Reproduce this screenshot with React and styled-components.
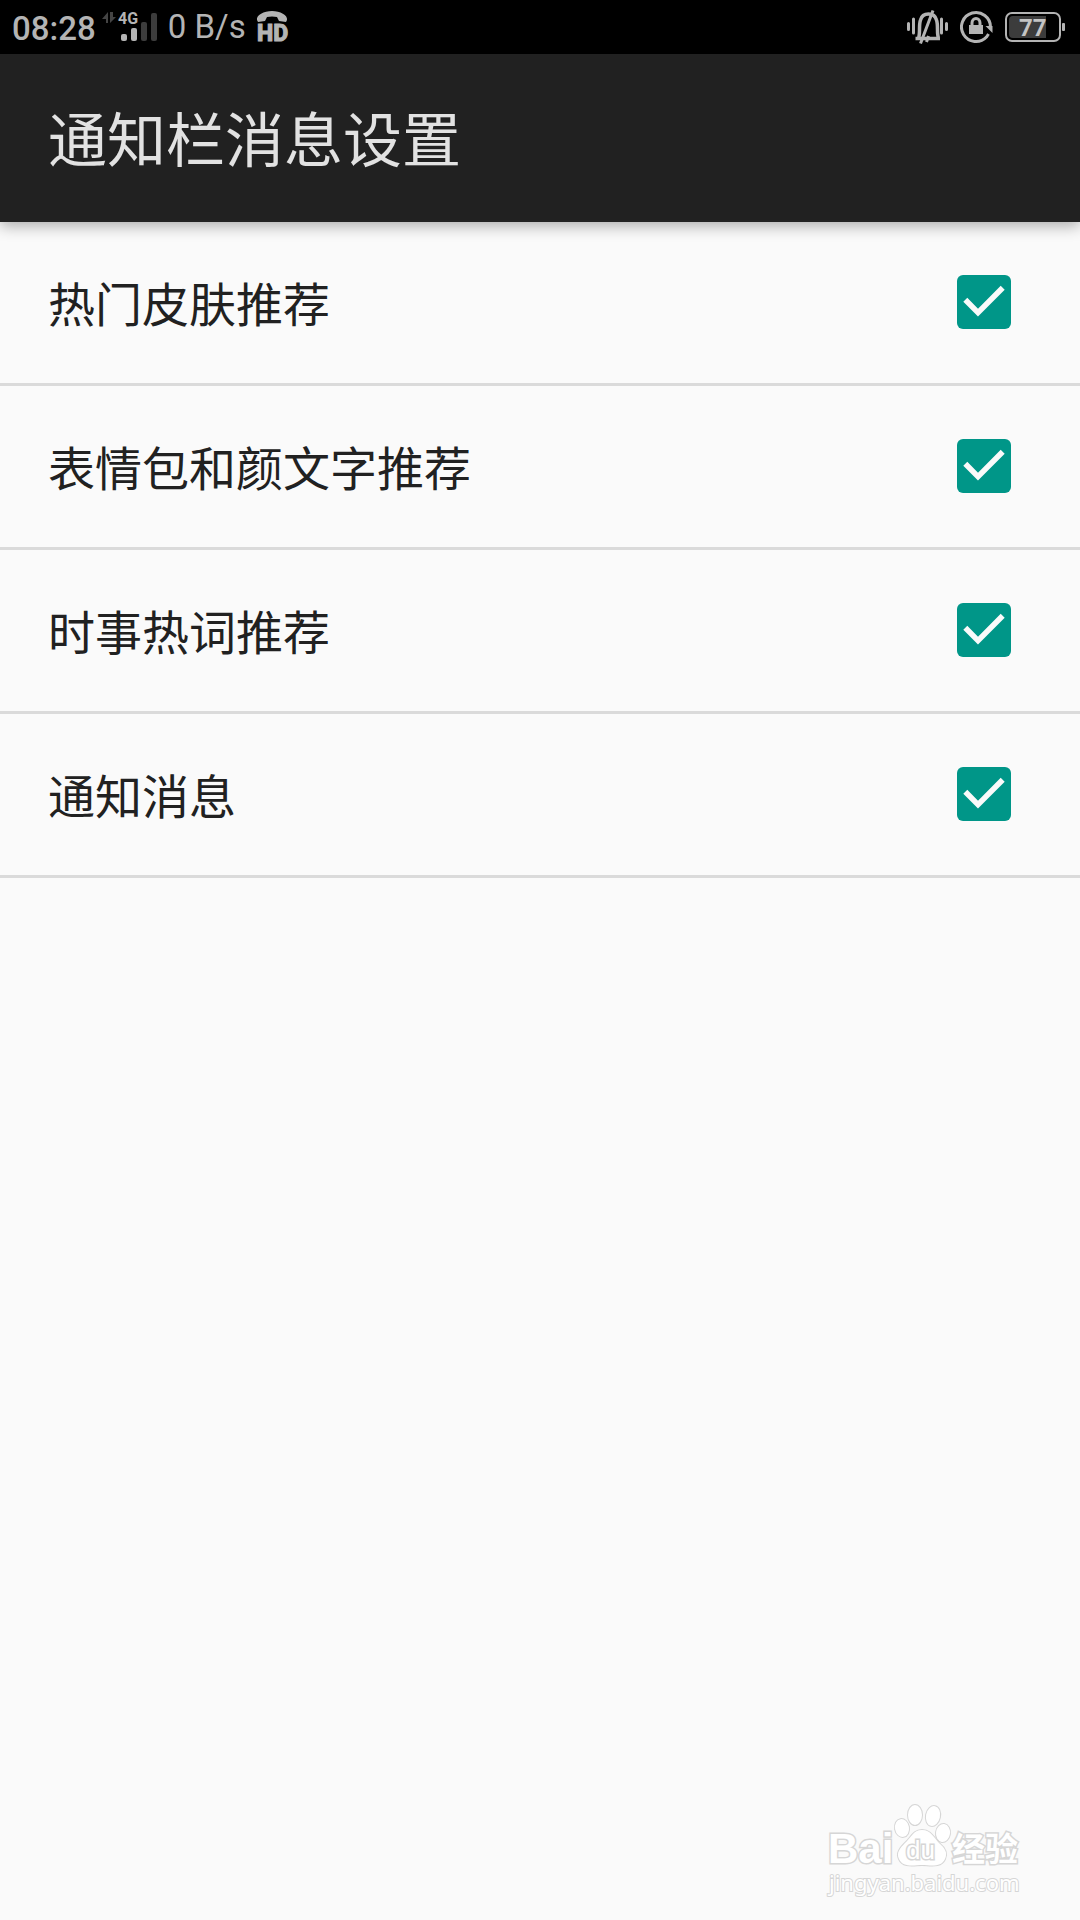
import React, { useState } from 'react';
import styled, { createGlobalStyle } from 'styled-components';

const GlobalStyle = createGlobalStyle`
  body {
    margin: 0;
    background: #fafafa;
    font-family: Roboto, 'Noto Sans CJK SC', sans-serif;
  }
`;

const Page = styled.div`
  display: flex;
  flex-direction: column;
  min-height: 100vh;
`;

const StatusBar = styled.div`
  display: flex;
  justify-content: space-between;
  height: 54px;
  padding: 0 15px 0 12px;
  background: #000;
  color: #b4b4b4;
`;

const StatusGroup = styled.div`
  display: flex;
  align-items: center;
  gap: ${props => props.gap}px;
`;

const Clock = styled.span`
  font-size: 33px;
  font-weight: 500;
  line-height: 54px;
  padding-top: 4px;
`;

const Speed = styled.span`
  font-size: 33px;
  line-height: 54px;
`;

const Icon = styled.svg`
  display: block;
  flex: none;
`;

const Header = styled.header`
  display: flex;
  align-items: center;
  box-sizing: border-box;
  height: 168px;
  padding: 8px 48px 0;
  background: #212121;
  box-shadow: 0 4px 14px rgba(0, 0, 0, 0.32);
`;

const Title = styled.h1`
  margin: 0;
  color: #e2e2e2;
  font-size: 59px;
  font-weight: 400;
  line-height: 84px;
`;

const List = styled.ul`
  margin: 0;
  padding: 0;
  list-style: none;
`;

const Row = styled.li`
  border-bottom: 3px solid #dadada;
`;

const RowLabel = styled.label`
  display: flex;
  align-items: center;
  justify-content: space-between;
  box-sizing: border-box;
  height: 161px;
  padding: 0 69px 2px 48px;
  color: #212121;
  font-size: 47px;
  cursor: pointer;
`;

const CheckWrap = styled.span`
  display: grid;

  > * {
    grid-area: 1 / 1;
  }
`;

const Checkbox = styled.input`
  appearance: none;
  box-sizing: border-box;
  width: 54px;
  height: 54px;
  margin: 0;
  border: 6px solid #757575;
  border-radius: 6px;
  cursor: pointer;

  &:checked {
    border: none;
    background: #009688;
  }
`;

const Tick = styled.svg`
  pointer-events: none;
`;

const Footer = styled.footer`
  display: flex;
  justify-content: flex-end;
  margin-top: auto;
  padding: 0 55px 15px 0;
`;

const SignalIcon = () => (
  <Icon width="60" height="54" viewBox="103 0 60 54" fill="#b4b4b4">
    <path d="M109 12v11h-2v-4h-4zM111 12v11l6-6h-3v-5z" fill="#444" />
    <text x="119" y="24" fontSize="16" fontWeight="700">4G</text>
    <rect x="122" y="34" width="6" height="7" rx="2" />
    <rect x="132" y="28" width="6" height="13" rx="2" />
    <rect x="142" y="22" width="6" height="19" rx="2" fill="#3c3c3c" />
    <rect x="152" y="13" width="6" height="28" rx="2" fill="#3c3c3c" />
  </Icon>
);

const HdCallIcon = () => (
  <Icon width="38" height="54" viewBox="252 0 38 54" fill="#b4b4b4">
    <path d="M257 20c-1-5 7-9 15-9s16 4 15 9l-1 2-7-1-2-4q-5-1-10 0l-2 4-7 1z" />
    <text x="257" y="41" fontSize="23" fontWeight="800" stroke="#b4b4b4" strokeWidth="1">HD</text>
  </Icon>
);

const MutedBellIcon = () => (
  <Icon width="42" height="54" viewBox="906 0 42 54" fill="none" stroke="#b4b4b4" strokeWidth="3">
    <path d="M908.500 23.500v6M913.500 19v14M941.500 19v14M946.500 23.500v6" strokeLinecap="round" />
    <path d="M915.500 38.500h24.500M918.500 38c2-5 0-12 2-18 2-8 14-8 16 0 2 6 0 13 2 18" strokeWidth="3.500" />
    <path d="M933 10.500L920.500 43.500M928.500 36l-2 6" />
  </Icon>
);

const RotationLockIcon = () => (
  <Icon width="33" height="54" viewBox="960 0 33 54" fill="none" stroke="#b4b4b4" strokeWidth="3">
    <path d="M990.500 27a14.500 14.500 0 1 0-4 10l2-3" />
    <path d="M985.500 26h7v7z" fill="#b4b4b4" stroke="none" />
    <rect x="969" y="25" width="14" height="9" fill="#b4b4b4" stroke="none" />
    <path d="M972 27v-4a4 4.500 0 0 1 8 0v4" />
  </Icon>
);

const BatteryIcon = () => (
  <Icon width="60" height="54" viewBox="1005 0 60 54">
    <rect x="1006" y="13" width="54" height="28" rx="6" fill="none" stroke="#b4b4b4" strokeWidth="2" />
    <path d="M1046 16v22h-33q-4 0-4-4V20q0-4 4-4z" fill="#3c3c3c" />
    <rect x="1062" y="23" width="3" height="8" rx="1" fill="#b4b4b4" />
    <text x="1019" y="36" fontSize="24" fontWeight="700" fill="#c4c4c4">77</text>
  </Icon>
);

const BaiduMark = () => (
  <Icon
    width="200"
    height="105"
    viewBox="825 1800 200 105"
    fill="#fff"
    stroke="#d6d6d6"
    strokeWidth="2"
    paintOrder="stroke"
    fontFamily="'Liberation Sans', 'Noto Sans CJK SC', sans-serif"
  >
    <text x="828" y="1863" fontSize="42" fontWeight="700" strokeWidth="3">Bai</text>
    <ellipse cx="902" cy="1828" rx="7" ry="9" transform="rotate(-10 902 1828)" />
    <ellipse cx="915" cy="1815" rx="7" ry="10" />
    <ellipse cx="933" cy="1816" rx="7" ry="10" transform="rotate(12 933 1816)" />
    <ellipse cx="943" cy="1833" rx="7" ry="9" transform="rotate(8 943 1833)" />
    <path d="M922 1830c9 0 12 8 17 13 6 5 9 10 6 16-4 9-15 6-23 6s-19 3-23-6c-3-6 1-11 6-16 6-5 8-13 17-13z" />
    <text x="906" y="1859" fontSize="26" strokeWidth="3">du</text>
    <text x="952" y="1861" fontSize="33" fontWeight="700" strokeWidth="3">经验</text>
    <text x="829" y="1891" fontSize="22" fontFamily="'Noto Sans', sans-serif">jingyan.baidu.com</text>
  </Icon>
);

const settings = [
  { id: 'skin', label: '热门皮肤推荐' },
  { id: 'emoji', label: '表情包和颜文字推荐' },
  { id: 'hotwords', label: '时事热词推荐' },
  { id: 'message', label: '通知消息' },
];

export default function App() {
  const [checked, setChecked] = useState({ skin: true, emoji: true, hotwords: true, message: true });

  const toggle = id => setChecked({ ...checked, [id]: !checked[id] });

  return (
    <Page>
      <GlobalStyle />
      <StatusBar>
        <StatusGroup gap={6}>
          <Clock>08:28</Clock>
          <SignalIcon />
          <Speed>0 B/s</Speed>
          <HdCallIcon />
        </StatusGroup>
        <StatusGroup gap={12}>
          <MutedBellIcon />
          <RotationLockIcon />
          <BatteryIcon />
        </StatusGroup>
      </StatusBar>
      <Header>
        <Title>通知栏消息设置</Title>
      </Header>
      <List>
        {settings.map(({ id, label }) => (
          <Row key={id}>
            <RowLabel htmlFor={id}>
              {label}
              <CheckWrap>
                <Checkbox type="checkbox" id={id} checked={checked[id]} onChange={() => toggle(id)} />
                {checked[id] && (
                  <Tick width="54" height="54" viewBox="0 0 54 54" fill="none" stroke="#fafafa" strokeWidth="5.600">
                    <path d="M8.300 24.700L21 37.600L45.700 12.700" />
                  </Tick>
                )}
              </CheckWrap>
            </RowLabel>
          </Row>
        ))}
      </List>
      <Footer>
        <BaiduMark />
      </Footer>
    </Page>
  );
}
